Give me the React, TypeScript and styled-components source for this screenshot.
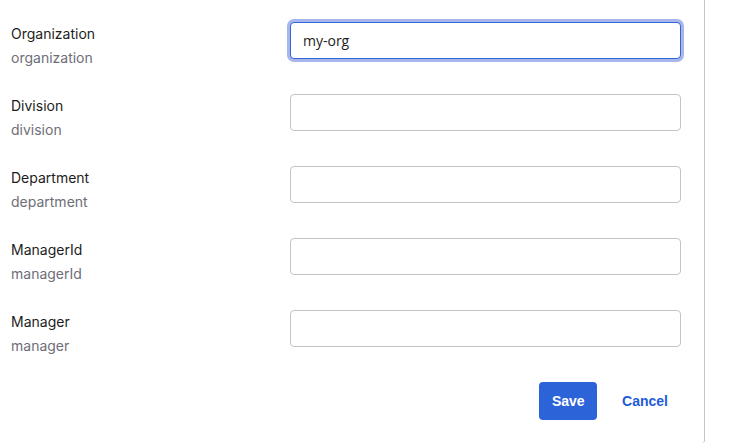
import React, { useState } from "react";
import styled, { createGlobalStyle } from "styled-components";

const GlobalStyle = createGlobalStyle`
  body {
    margin: 0;
    background: #fff;
    font-family: Inter, "Noto Sans", sans-serif;
  }
`;

const Card = styled.div`
  width: 705px;
  height: 443px;
  box-sizing: border-box;
  border-right: 1px solid #c4c4c8;
  border-bottom-right-radius: 3px;
  padding: 22px 0 0 11px;
`;

// each row is as tall as its input; the label/hint pair spills below it
const Form = styled.form`
  display: grid;
  grid-template-columns: 279px 391px;
  grid-auto-rows: 37px;
  row-gap: 35px;
`;

const LabelBlock = styled.div`
  padding-top: 2px;
  display: flex;
  flex-direction: column;
  gap: 4px;
`;

const Label = styled.label`
  font-size: 14px;
  line-height: 20px;
  color: #1d1d21;
`;

const Hint = styled.span`
  font-size: 14px;
  line-height: 20px;
  color: #6e6e78;
`;

const Input = styled.input<{ $focused?: boolean }>`
  width: 100%;
  height: 37px;
  box-sizing: border-box;
  border-radius: 4px;
  padding: 0 12px;
  font-family: "Open Sans", "Noto Sans", sans-serif;
  font-size: 14px;
  color: #1d1d21;
  caret-color: #1d1d21;
  background: #fff;
  outline: none;
  border: 1px solid ${(p) => (p.$focused ? "#2f66d8" : "#c4c4c8")};
  box-shadow: ${(p) => (p.$focused ? "0 0 0 3px #a9b6ec" : "none")};
`;

const Actions = styled.div`
  grid-column: 2;
  display: flex;
  justify-content: flex-end;
  align-items: flex-start;
  gap: 13px;
`;

const Button = styled.button<{ $primary?: boolean }>`
  height: 38px;
  border-radius: 4px;
  border: none;
  font-family: "Liberation Sans", Arial, sans-serif;
  font-weight: 700;
  font-size: 14px;
  cursor: pointer;
  padding: ${(p) => (p.$primary ? "0 12.5px" : "0 13px 0 12px")};
  color: ${(p) => (p.$primary ? "#fff" : "#1f5bd8")};
  background: ${(p) => (p.$primary ? "#2d63d9" : "transparent")};
`;

const fields = [
  { label: "Organization", hint: "organization", value: "my-org" },
  { label: "Division", hint: "division", value: "" },
  { label: "Department", hint: "department", value: "" },
  { label: "ManagerId", hint: "managerId", value: "" },
  { label: "Manager", hint: "manager", value: "" },
];

export default function App() {
  const [values, setValues] = useState(fields.map((f) => f.value));

  return (
    <>
      <GlobalStyle />
      <Card>
        <Form onSubmit={(e) => e.preventDefault()}>
          {fields.map((f, i) => (
            <React.Fragment key={f.hint}>
              <LabelBlock>
                <Label htmlFor={f.hint}>{f.label}</Label>
                <Hint>{f.hint}</Hint>
              </LabelBlock>
              <Input
                id={f.hint}
                autoFocus={i === 0}
                $focused={i === 0}
                value={values[i]}
                onChange={(e) => {
                  const next = [...values];
                  next[i] = e.target.value;
                  setValues(next);
                }}
              />
            </React.Fragment>
          ))}
          <Actions>
            <Button $primary type="submit">Save</Button>
            <Button type="button">Cancel</Button>
          </Actions>
        </Form>
      </Card>
    </>
  );
}
